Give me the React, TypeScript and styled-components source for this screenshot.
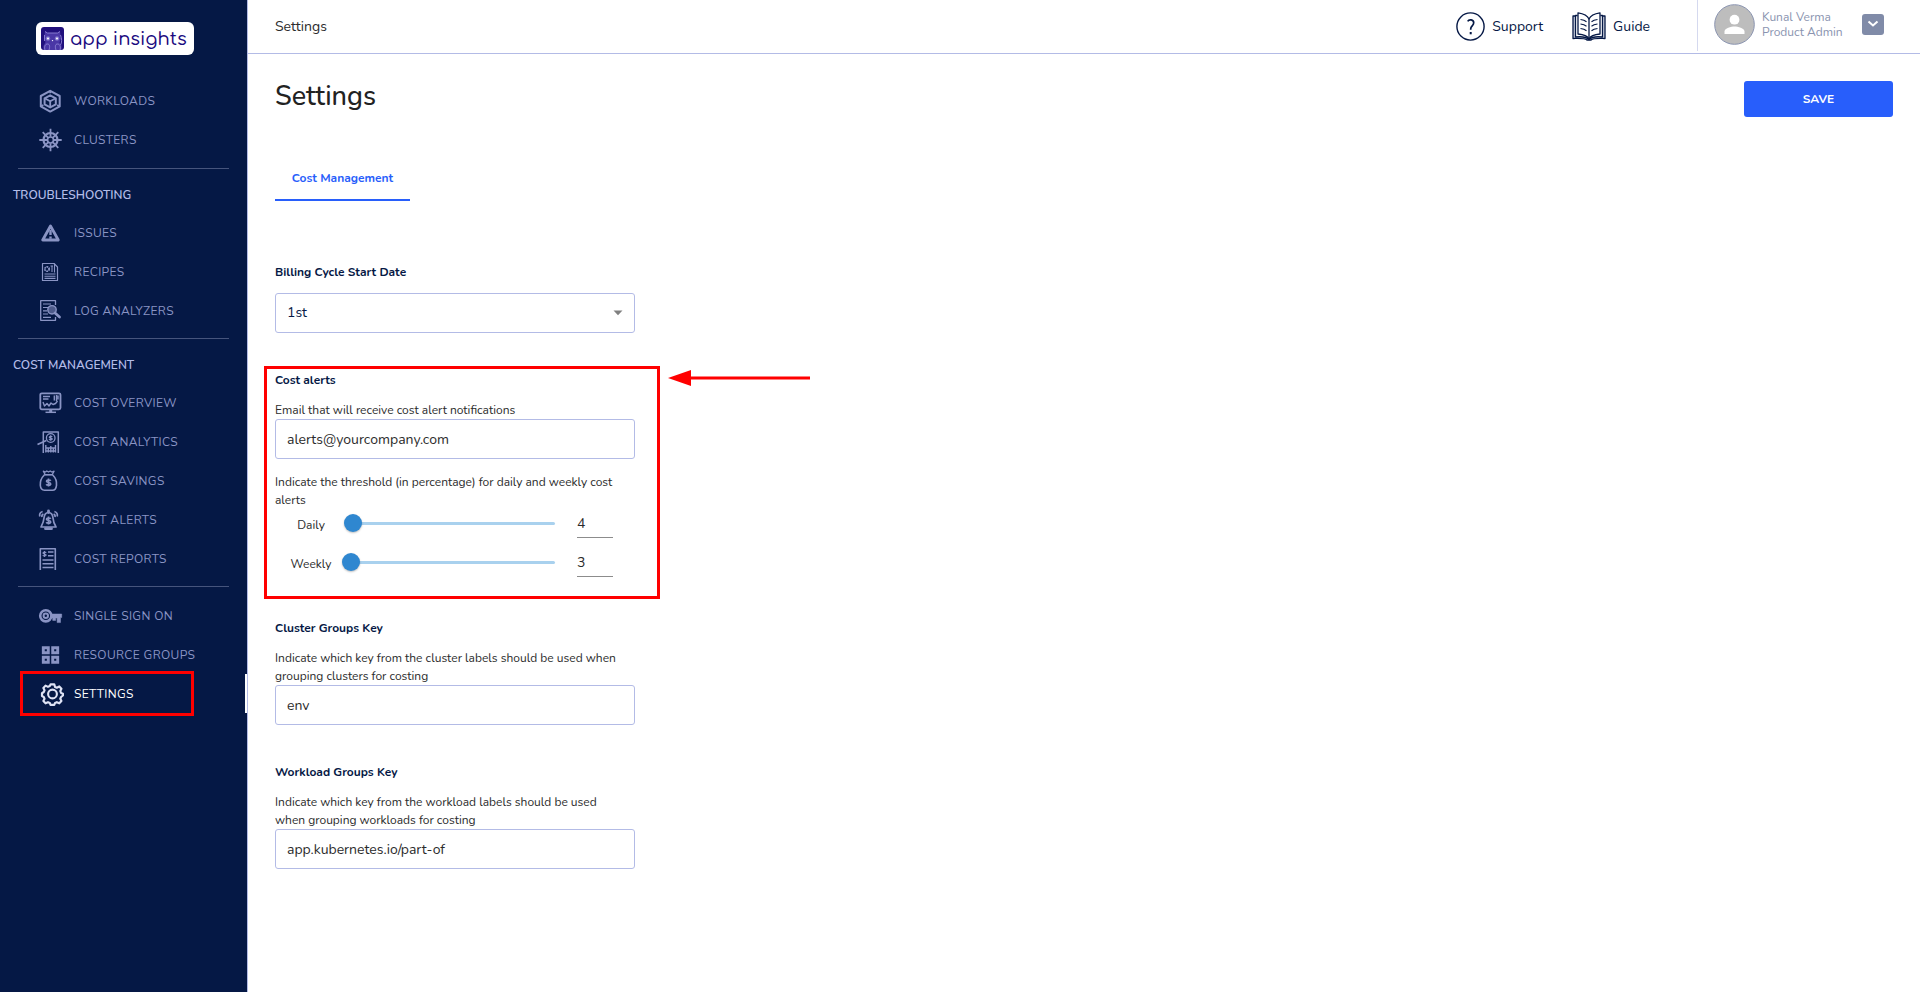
import React, { useState } from 'react';
import styled, { createGlobalStyle, css } from 'styled-components';

const navy = '#051845';
const line = '#b3bbe6';
const red = '#ff0000';

const GlobalStyle = createGlobalStyle`
  *, *::before, *::after { box-sizing: border-box; }
  body {
    margin: 0;
    background: #fff;
    color: #2b2b2b;
    font-family: Nunito, "Noto Sans", sans-serif;
    font-size: 12px;
    line-height: 18px;
  }
  button, input, select { font: inherit; color: inherit; margin: 0; }
`;

const Page = styled.div`
  display: flex;
  min-height: 100vh;
`;

const Sidebar = styled.aside`
  flex: 0 0 248px;
  background: ${navy};
  border-right: 1px solid ${line};
`;

const Logo = styled.a`
  display: flex;
  align-items: center;
  gap: 6px;
  width: 158px;
  height: 33px;
  margin: 22px 0 26px 36px;
  padding: 0 5px;
  border-radius: 6px;
  background: #fff;
  color: #1a0a80;
  font-family: Comfortaa, Lato, sans-serif;
  font-size: 18px;
  font-weight: 500;
  line-height: 24px;
  text-decoration: none;
  white-space: nowrap;

  svg { flex: none; }
`;

const NavList = styled.ul`
  list-style: none;
  margin: 0;
  padding: 0;

  &:first-child { padding-bottom: 1px; }
`;

const NavItem = styled.li`
  position: relative;
`;

const NavLink = styled.a<{ $active?: boolean }>`
  display: flex;
  align-items: center;
  height: 39px;
  padding-left: 36px;
  color: #8a94c4;
  font-size: 12px;
  letter-spacing: 0.03em;
  text-transform: uppercase;
  text-decoration: none;

  svg {
    flex: none;
    width: 28px;
    height: 24px;
    margin-right: 10px;
  }

  ${(p) =>
    p.$active &&
    css`
      color: #fff;
      border-right: 2px solid #fff;
      svg { color: #dfe3f5; }
    `}
`;

const NavHighlight = styled.span`
  position: absolute;
  inset: -3px auto auto 20px;
  width: 174px;
  height: 45px;
  border: 3px solid ${red};
  pointer-events: none;
`;

const NavRule = styled.hr`
  height: 1px;
  margin: 8px 18px 0;
  border: 0;
  background: #46547c;
`;

const NavHeading = styled.h2`
  height: 44px;
  margin: 0;
  padding: 17px 0 0 13px;
  color: #b3bce8;
  font-size: 12px;
  font-weight: 600;
  line-height: 18px;
  text-transform: uppercase;
`;

const NavTail = styled.div`
  padding-top: 9px;
`;

const Main = styled.div`
  flex: 1;
  min-width: 0;
`;

const TopBar = styled.header`
  display: flex;
  height: 54px;
  padding-left: 27px;
  border-bottom: 1px solid ${line};
  font-size: 14px;
`;

const Crumb = styled.span`
  flex: 1;
  align-self: center;
`;

const TopLink = styled.a`
  display: flex;
  align-items: center;
  gap: 7px;
  margin-right: 29px;
  color: ${navy};
  text-decoration: none;

  svg { flex: none; }
`;

const Account = styled.div`
  display: flex;
  align-items: center;
  width: 223px;
  height: 51px;
  margin-left: 18px;
  padding: 0 36px 3px 16px;
  border-left: 1px solid #d5d9ef;
`;

const AccountText = styled.div`
  flex: 1;
  margin-left: 7px;
  padding-top: 2px;
  color: #8a94b0;
  font-size: 12px;
  line-height: 15px;
  white-space: nowrap;
`;

const MenuButton = styled.button`
  display: flex;
  align-items: center;
  justify-content: center;
  width: 22px;
  height: 21px;
  padding: 0;
  border: 0;
  border-radius: 3px;
  background: #808ba8;
  color: #fff;
`;

const Content = styled.main`
  padding: 27px 27px 60px;
`;

const TitleRow = styled.div`
  display: flex;
  align-items: center;
  justify-content: space-between;
  height: 36px;
`;

const Title = styled.h1`
  margin: 0;
  padding-bottom: 4px;
  color: #222;
  font-size: 27px;
  font-weight: 500;
  line-height: 32px;
`;

const SaveButton = styled.button`
  width: 149px;
  height: 36px;
  padding: 0;
  border: 0;
  border-radius: 3px;
  background: #285efb;
  color: #fff;
  font-size: 12px;
  font-weight: 700;
`;

const Tabs = styled.div`
  display: flex;
  margin-top: 40px;
`;

const Tab = styled.button`
  min-width: 135px;
  height: 44px;
  padding: 0 14px;
  border: 0;
  border-bottom: 2px solid #285efb;
  background: none;
  color: #285efb;
  font-size: 12px;
  font-weight: 700;
`;

const Form = styled.form`
  display: flex;
  flex-direction: column;
  gap: 38px;
  width: 360px;
  max-width: 100%;
  margin-top: 62px;
`;

const Section = styled.section<{ $tall?: boolean }>`
  position: relative;
  padding-bottom: ${(p) => (p.$tall ? 4 : 0)}px;
`;

const SectionTitle = styled.h3`
  margin: 0 0 12px;
  color: ${navy};
  font-size: 12px;
  font-weight: 700;
  line-height: 18px;
`;

const Hint = styled.label`
  display: block;
  padding-right: 10px;
`;

const box = css`
  display: block;
  width: 100%;
  height: 40px;
  padding: 0 11px;
  border: 1px solid ${line};
  border-radius: 3px;
  background: #fff;
  font-size: 14px;
  outline: none;
`;

const TextInput = styled.input`
  ${box}
`;

const SelectWrap = styled.div`
  position: relative;

  svg {
    position: absolute;
    top: 17px;
    right: 12px;
    pointer-events: none;
  }
`;

const Select = styled.select`
  ${box}
  appearance: none;
  color: ${navy};
`;

const ThresholdText = styled.p`
  margin: 14px 0 0;
`;

const Sliders = styled.div`
  display: grid;
  grid-template-columns: 50px 219px 36px;
  row-gap: 10px;
  padding-left: 11px;
`;

const SliderLabel = styled.label`
  padding-top: 7px;
  text-align: center;
`;

const Range = styled.input`
  appearance: none;
  height: 29px;
  width: 100%;
  background: none;

  &::-webkit-slider-runnable-track {
    height: 3px;
    border-radius: 2px;
    background: linear-gradient(90deg, transparent 9px, #a9d1ee 9px);
  }

  &::-webkit-slider-thumb {
    appearance: none;
    width: 18px;
    height: 18px;
    margin-top: -8px;
    border-radius: 50%;
    background: #2f87d0;
    box-shadow: 0 1px 2px rgba(0, 0, 0, 0.25);
  }
`;

const NumberInput = styled.input`
  width: 36px;
  height: 29px;
  margin-left: 22px;
  padding: 0;
  border: 0;
  border-bottom: 1px solid #8c8c8c;
  background: none;
  font-size: 14px;
  outline: none;
`;

const SectionHighlight = styled.span`
  position: absolute;
  inset: -5px -25px -18px -11px;
  border: 3px solid ${red};
  pointer-events: none;
`;

const Arrow = styled.svg`
  position: absolute;
  top: -2px;
  left: 393px;
  pointer-events: none;
`;

const NavSvg = ({ children }: { children: React.ReactNode }) => (
  <svg viewBox="0 0 28 24" fill="none" stroke="currentColor" strokeWidth="1.5" strokeLinejoin="round" aria-hidden="true">
    {children}
  </svg>
);

const dollar = 'M2.3-1.8C1.7-2.7-2-2.9-2-1.2-2 .4 2.2-.4 2.2 1.4 2.2 3-1.6 2.9-2.3 1.7M0-4V4';

const icons = {
  workloads: (
    <NavSvg>
      <path d="M14.200 1.800 23.7 7v10.4L14.200 22.6 4.8 17.4V7Z" strokeWidth="2" />
      <path d="M14.200 6.3 19.800 9.3v6L14.200 18.4 8.6 15.3v-6Z" strokeWidth="2" />
      <path d="M8.6 9.3 14.200 12.3l5.6-3M14.200 12.3v6M14.200 1.8v2.500M4.8 17.4l2.500-1.500M23.7 17.4l-2.500-1.500" strokeWidth="1.8" />
    </NavSvg>
  ),
  clusters: (
    <NavSvg>
      <circle cx="14.500" cy="12" r="7" strokeWidth="2.200" />
      <circle cx="14.500" cy="12" r="3" strokeWidth="1.700" />
      <path d="M14.500 .8v8M14.500 15.200v8M3.300 12h8M17.700 12h8M6.700 4.200l5.600 5.600M16.700 14.200l5.600 5.600M22.300 4.200l-5.600 5.600M12.300 14.200l-5.600 5.600" strokeWidth="1.800" />
    </NavSvg>
  ),
  issues: (
    <NavSvg>
      <path d="M14.500 5 22.300 19H6.700Z" strokeWidth="2.800" />
      <path d="M14.500 9v5M14.500 15.500v2.200" strokeWidth="2.400" />
    </NavSvg>
  ),
  recipes: (
    <NavSvg>
      <path d="M6.500 3.500H18l3.500 3.500v13.500h-15Z" strokeWidth="1.200" />
      <circle cx="11" cy="9" r="2.200" strokeWidth="1.800" strokeDasharray="1.600 .6" />
      <path d="M8.500 14h11M8.500 16.200h11M8.500 18.400h11M18.500 3.500v9M16 6v6M14.500 6h2.500" strokeWidth="1.100" />
    </NavSvg>
  ),
  logs: (
    <NavSvg>
      <path d="M19.500 6V1.700H4.700v19.600h14.800V18" strokeWidth="1.300" />
      <path d="M7 5h8M7 8.500h5M7 11.800h4M7 15h5M7 18.300h8" strokeWidth="1.200" />
      <circle cx="16" cy="10.800" r="4.200" fill="currentColor" fillOpacity=".55" strokeWidth="1.400" />
      <path d="m19 14 4.500 4" strokeWidth="2.800" strokeLinecap="round" />
    </NavSvg>
  ),
  overview: (
    <NavSvg>
      <rect x="4.300" y="2.300" width="20.200" height="16" rx="1.500" strokeWidth="1.800" />
      <path d="M9.500 21.300h10.500" strokeWidth="1.500" />
      <path d="M14.700 18.500v2.600" strokeWidth="3" />
      <path d="M7 5.500h7M7 8h5.500M18.300 4.500v5M20.500 4v6M22 4.500v4" strokeWidth="1.400" />
      <path d="m7 11 1.500 4 2.500-2.500 2 2.500 2-3 2 1.500 2.500-1 2-2.500" strokeWidth="1.400" />
    </NavSvg>
  ),
  analytics: (
    <NavSvg>
      <path d="M7.300 23V1.900h15V23" strokeWidth="1.500" />
      <circle cx="14.700" cy="8" r="4.300" strokeWidth="1.300" />
      <path d={dollar} transform="translate(14.700 8) scale(.7)" strokeWidth="1.800" />
      <path d="m1.500 14.500 8.800-4" strokeWidth="1.900" />
      <path d="M9.800 22.500V15M12.300 22.500V17.500M14.800 22.500V16M17.300 22.500V17.500M19.500 22.500V15M9.500 18h10M9.500 21h10" strokeWidth="1.400" />
    </NavSvg>
  ),
  savings: (
    <NavSvg>
      <path d="M8.500 5.800h8c3 3 4.400 7 4 10.500-.3 2.600-1.600 4.900-4 4.900h-8c-2.600 0-4-2-4.200-4.900-.3-3.500 1.200-7.500 4.200-10.500Z" strokeWidth="1.600" />
      <path d="m7.300 2.200 2 3.500h6.800l2-3.500-2.300.8-1.600-1-1.700 1-1.700-1-1.300 1Z" strokeWidth="1.300" />
      <path d={dollar} transform="translate(12.500 13.500)" strokeWidth="1.700" />
    </NavSvg>
  ),
  alerts: (
    <NavSvg>
      <path d="M12.500 4.500c-3.200 0-4.200 2.600-4.500 5.500-.3 4-1.700 6.500-3 9h15c-1.500-2.500-2.700-5-3-9-.3-2.900-1.500-5.500-4.500-5.500Z" strokeWidth="1.700" />
      <path d="M12.500 3v1.500M9.500 20.700h6" strokeWidth="2.800" strokeLinecap="round" />
      <path d={dollar} transform="translate(12.500 12.500)" strokeWidth="1.700" />
      <path d="M3.800 8.500c-.5-2.200.5-4.300 2.800-5M6 9c-.3-1.200.2-2.400 1.400-3M21.200 8.500c.5-2.200-.5-4.300-2.800-5M19 9c.3-1.200-.2-2.400-1.400-3" strokeWidth="1.700" />
    </NavSvg>
  ),
  reports: (
    <NavSvg>
      <path d="M4.300 23V1.700h15V23" strokeWidth="1.600" />
      <path d={dollar} transform="translate(8.500 7) scale(.75)" strokeWidth="1.600" />
      <path d="M12 5h5.500M12 8.800h5.500M6.500 13h11M6.500 16.800h11M6.500 20.500h11" strokeWidth="1.500" />
    </NavSvg>
  ),
  key: (
    <NavSvg>
      <circle cx="9.800" cy="11.800" r="5.600" strokeWidth="2.600" />
      <circle cx="9.800" cy="11.800" r="2.200" strokeWidth="2" />
      <path d="M15 10h10.700v3.600h-1.200v5h-3.400v-4.600h-1.400v2.400h-3v-2.400H15Z" fill="currentColor" strokeWidth=".5" />
    </NavSvg>
  ),
  groups: (
    <NavSvg>
      <path d="M7.300 4.800h5v5h-5ZM16.700 4.800h5v5h-5ZM7.300 14.200h5v5h-5ZM16.700 14.200h5v5h-5Z" strokeWidth="2.900" strokeLinejoin="miter" />
    </NavSvg>
  ),
  settings: (
    <NavSvg>
      <path
        d="m14.500 1.600h4l.8 2.800 1.900.8 2.600-1.300 2.300 2.500-1.200 2.400.8 2 2 .8v1.900l-2 1.600-.8 1.800 1.200 2.500-2.300 2.400-2.600-1.200-1.900.8-.8 2h-4l-.8-2-1.900-.8-2.600 1.200-2.300-2.400 1.200-2.500-.8-1.800-1.900-1v-3l1.900-1.300.8-1.900-1.200-2.400 2.300-2.500 2.600 1.300 1.900-.8Z"
        transform="translate(.9 .8) scale(.94)"
        strokeWidth="2.300"
      />
      <circle cx="16.500" cy="12" r="4.400" strokeWidth="2.100" />
    </NavSvg>
  ),
};

type IconName = keyof typeof icons;
type Link = { icon: IconName; text: string; active?: boolean };

const topLinks: Link[] = [
  { icon: 'workloads', text: 'Workloads' },
  { icon: 'clusters', text: 'Clusters' },
];
const troubleshooting: Link[] = [
  { icon: 'issues', text: 'Issues' },
  { icon: 'recipes', text: 'Recipes' },
  { icon: 'logs', text: 'Log Analyzers' },
];
const costs: Link[] = [
  { icon: 'overview', text: 'Cost Overview' },
  { icon: 'analytics', text: 'Cost Analytics' },
  { icon: 'savings', text: 'Cost Savings' },
  { icon: 'alerts', text: 'Cost Alerts' },
  { icon: 'reports', text: 'Cost Reports' },
];
const admin: Link[] = [
  { icon: 'key', text: 'Single Sign On' },
  { icon: 'groups', text: 'Resource Groups' },
  { icon: 'settings', text: 'Settings', active: true },
];

const NavGroup = ({ links }: { links: Link[] }) => (
  <NavList>
    {links.map((l) => (
      <NavItem key={l.text}>
        <NavLink href="#" $active={l.active} aria-current={l.active ? 'page' : undefined}>
          {icons[l.icon]}
          {l.text}
        </NavLink>
        {l.active && <NavHighlight />}
      </NavItem>
    ))}
  </NavList>
);

const LogoMark = () => (
  <svg width="23" height="23" viewBox="0 0 23 23" aria-hidden="true">
    <rect width="23" height="23" rx="3" fill="#21107c" />
    <path d="M4 4.500 6.500 6h10L19 4.500l1 7-1.500 4 2 3V23h-18v-4l2-4L3 11Z" fill="#4a37a6" />
    <path d="M4 4.500 6.500 6h10L19 4.500M3.500 8v6M19.500 8c1.500 3 1.500 8 0 10M4 23c-1-3 0-6 2.500-6S9 20 8 23M19 23c1-3 0-6-2.500-6S14 20 15 23" stroke="#8f83d6" strokeWidth=".9" fill="none" />
    <circle cx="7" cy="11.500" r="2.200" fill="#8175cc" />
    <circle cx="16" cy="11.500" r="2.200" fill="#8175cc" />
    <circle cx="7" cy="11.500" r="1" fill="#fff" />
    <circle cx="16" cy="11.500" r="1" fill="#fff" />
    <path d="m10.700 13 .8 1.500.8-1.500Z" fill="#fff" />
  </svg>
);

const HelpIcon = () => (
  <svg width="29" height="30" viewBox="0 0 29 30" fill="none" stroke={navy} aria-hidden="true">
    <circle cx="14.500" cy="14.500" r="13.600" strokeWidth="1.400" />
    <path d="M11.700 9.300c1.300-2.300 6-2 6 1.500 0 3-3 3.200-3 6.200v.8" strokeWidth="1.700" />
    <path d="M14.700 20v2.300" strokeWidth="2" />
  </svg>
);

const BookIcon = () => (
  <svg width="34" height="30" viewBox="0 0 34 30" fill="none" stroke={navy} strokeWidth="1.300" strokeLinejoin="round" aria-hidden="true">
    <path d="M5.500 4H1v22.500c5 0 12-.5 14 1.500h4c2-2 9-1.500 14-1.500V4h-4.500" fill="#cdd2e0" />
    <path d="M5.500 3.500h-2V25c5-.5 11-.2 13.500 2.500C19.500 24.800 25.500 24.500 30.500 25V3.500h-2" fill="#fff" />
    <path d="M6 .8C11 1.500 15.500 3.500 17 7c1.500-3.500 6-5.500 11-6.200V22c-5 .5-9.500 2-11 5-1.500-3-6-4.500-11-5Z" fill="#fff" />
    <path d="M17 7v20.500" />
    <path d="M8.500 7.500c2.500.3 4.500 1 6 2.200M8.500 12c2.500.3 4.500 1 6 2.200M8.500 16.500c2.500.3 4.500 1 6 2.200M25.500 7.500c-2.500.3-4.500 1-6 2.200M25.500 12c-2.500.3-4.500 1-6 2.200M25.500 16.500c-2.500.3-4.500 1-6 2.200" strokeWidth="1.100" />
  </svg>
);

const Avatar = () => (
  <svg width="41" height="41" viewBox="0 0 41 41" aria-hidden="true">
    <circle cx="20.500" cy="20.500" r="19.800" fill="#bdbdbd" stroke="#8a94b0" />
    <circle cx="20.500" cy="15.700" r="4.900" fill="#fff" />
    <path d="M10.500 30v-2.500c0-3.300 6.700-5 10-5s10 1.700 10 5V30Z" fill="#fff" />
  </svg>
);

export default function App() {
  const [daily, setDaily] = useState('4');
  const [weekly, setWeekly] = useState('3');

  const sliders = [
    { id: 'daily', text: 'Daily', value: daily, set: setDaily },
    { id: 'weekly', text: 'Weekly', value: weekly, set: setWeekly },
  ];

  return (
    <Page>
      <GlobalStyle />
      <Sidebar>
        <Logo href="#">
          <LogoMark />
          app insights
        </Logo>
        <nav>
          <NavGroup links={topLinks} />
          <NavRule />
          <NavHeading>Troubleshooting</NavHeading>
          <NavGroup links={troubleshooting} />
          <NavRule />
          <NavHeading>Cost Management</NavHeading>
          <NavGroup links={costs} />
          <NavRule />
          <NavTail>
            <NavGroup links={admin} />
          </NavTail>
        </nav>
      </Sidebar>

      <Main>
        <TopBar>
          <Crumb>Settings</Crumb>
          <TopLink href="#">
            <HelpIcon />
            Support
          </TopLink>
          <TopLink href="#">
            <BookIcon />
            Guide
          </TopLink>
          <Account>
            <Avatar />
            <AccountText>
              <div>Kunal Verma</div>
              <div>Product Admin</div>
            </AccountText>
            <MenuButton type="button" aria-label="Account menu">
              <svg width="12" height="8" viewBox="0 0 12 8" fill="none" stroke="currentColor" strokeWidth="2">
                <path d="m1.500 1.500 4.500 4 4.500-4" />
              </svg>
            </MenuButton>
          </Account>
        </TopBar>

        <Content>
          <TitleRow>
            <Title>Settings</Title>
            <SaveButton type="submit" form="settings-form">SAVE</SaveButton>
          </TitleRow>

          <Tabs role="tablist">
            <Tab type="button" role="tab" aria-selected="true">Cost Management</Tab>
          </Tabs>

          <Form id="settings-form" onSubmit={(e) => e.preventDefault()}>
            <Section>
              <SectionTitle>
                <label htmlFor="billing">Billing Cycle Start Date</label>
              </SectionTitle>
              <SelectWrap>
                <Select id="billing" defaultValue="1st">
                  <option>1st</option>
                  <option>15th</option>
                </Select>
                <svg width="10" height="6" viewBox="0 0 10 6" aria-hidden="true">
                  <path d="M.500.500h9L5 5.300Z" fill="#808080" />
                </svg>
              </SelectWrap>
            </Section>

            <Section $tall>
              <SectionTitle>Cost alerts</SectionTitle>
              <Hint htmlFor="email">Email that will receive cost alert notifications</Hint>
              <TextInput id="email" type="email" defaultValue="alerts@yourcompany.com" />
              <ThresholdText>
                Indicate the threshold (in percentage) for daily and weekly cost alerts
              </ThresholdText>
              <Sliders>
                {sliders.map((s) => (
                  <React.Fragment key={s.id}>
                    <SliderLabel htmlFor={s.id}>{s.text}</SliderLabel>
                    <Range id={s.id} type="range" min="0" max="100" value={s.value} onChange={(e) => s.set(e.target.value)} />
                    <NumberInput
                      aria-label={`${s.text} percentage`}
                      inputMode="numeric"
                      value={s.value}
                      onChange={(e) => s.set(e.target.value)}
                    />
                  </React.Fragment>
                ))}
              </Sliders>
              <SectionHighlight />
              <Arrow width="142" height="18" viewBox="0 0 142 18" aria-hidden="true">
                <path d="M0 9 23 1v16Z" fill={red} />
                <path d="M20 9h122" stroke={red} strokeWidth="3" />
              </Arrow>
            </Section>

            <Section>
              <SectionTitle>Cluster Groups Key</SectionTitle>
              <Hint htmlFor="cluster-key">
                Indicate which key from the cluster labels should be used when grouping clusters for costing
              </Hint>
              <TextInput id="cluster-key" defaultValue="env" />
            </Section>

            <Section>
              <SectionTitle>Workload Groups Key</SectionTitle>
              <Hint htmlFor="workload-key">
                Indicate which key from the workload labels should be used when grouping workloads for costing
              </Hint>
              <TextInput id="workload-key" defaultValue="app.kubernetes.io/part-of" />
            </Section>
          </Form>
        </Content>
      </Main>
    </Page>
  );
}
